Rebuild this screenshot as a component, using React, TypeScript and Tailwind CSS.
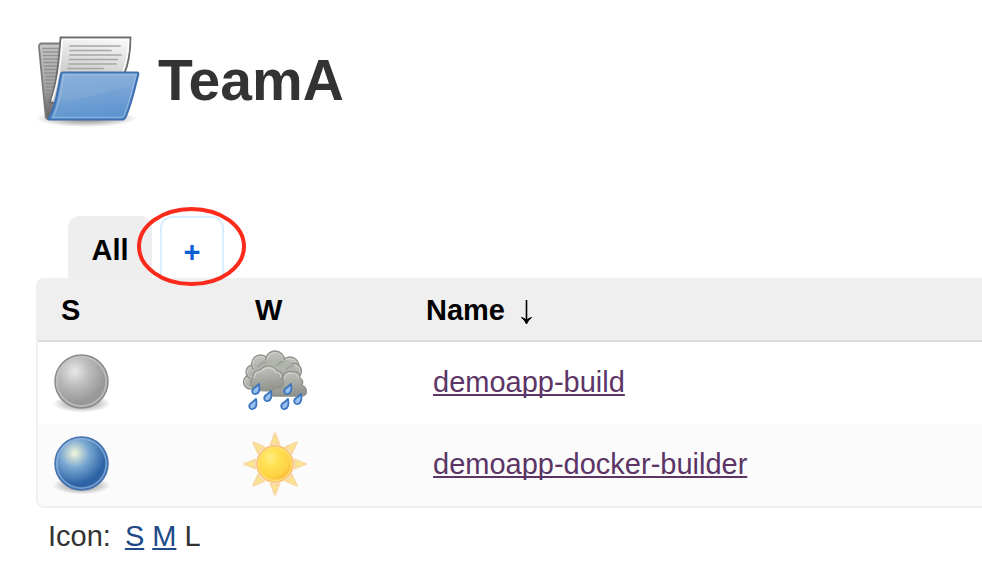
import React from "react";

function FolderIcon() {
  return (
    <svg width="106" height="94" viewBox="36 34 106 94" aria-hidden="true">
      <defs>
        <linearGradient id="front" x1="0" y1="0" x2="0.2" y2="1">
          <stop offset="0" stopColor="#84acd9" />
          <stop offset="0.5" stopColor="#77a3d5" />
          <stop offset="1" stopColor="#5f95d0" />
        </linearGradient>
        <linearGradient id="paper" x1="0.6" y1="0" x2="0.4" y2="1">
          <stop offset="0" stopColor="#f6f6f6" />
          <stop offset="0.5" stopColor="#d2d2d2" />
          <stop offset="1" stopColor="#c8c8c8" />
        </linearGradient>
        <linearGradient id="back" x1="0" y1="0" x2="0" y2="1">
          <stop offset="0" stopColor="#c8c8c8" />
          <stop offset="0.6" stopColor="#a0a0a0" />
          <stop offset="1" stopColor="#606060" />
        </linearGradient>
        <radialGradient id="folderShadow">
          <stop offset="0" stopColor="#000" stopOpacity="0.5" />
          <stop offset="0.6" stopColor="#000" stopOpacity="0.22" />
          <stop offset="1" stopColor="#000" stopOpacity="0" />
        </radialGradient>
      </defs>
      <ellipse cx="86" cy="118.500" rx="51" ry="8.500" fill="url(#folderShadow)" />
      <path d="M42 43.500h24l-4 75.500H48q-2 0-2.300-2.500L39 47q-.3-3.500 3-3.500z" fill="url(#back)" stroke="#7a7a7a" strokeWidth="1.800" />
      <path d="M42 48.500h17M42.500 52h17M43 55.500h16M43 59h16M43.500 62.500h15M44 66h14M44 69.500h14M44.500 73h13M45 76.500h12M45 80h11M45.500 83.500h10M46 87h9M46 90.500h8M46.500 94h6" stroke="#858585" strokeOpacity="0.75" strokeWidth="1.300" />
      <path d="M60.500 37.500h70c0 14-1.500 26-7 38L62 104l-12.500-1.500c4-10 8-22 11-65z" fill="url(#paper)" stroke="#6c6c6c" strokeWidth="1.800" />
      <path d="M62.500 39.500h66c0 12-1.500 22-6 33M62.300 40c-1 22-4 42-10 60" fill="none" stroke="#fff" strokeOpacity="0.9" strokeWidth="1.500" />
      <path d="M70 46h50M70 50.500h41M70 55h51M69.500 59.500h48M69 64h47M68 68.500h35" stroke="#a6a6a6" strokeWidth="1.700" strokeLinecap="round" />
      <path d="M49 118c6-10 8-22 12-43.500q.3-2 2-2h74q1.700 0 1.200 2c-4 16-7 30-12.500 42-1 2.300-2 3-4 3H50q-2.500 0-1-1.500z" fill="url(#front)" stroke="#3f72b2" strokeWidth="2.200" />
      <path d="M53 117.500c5-10 8-22 10.500-43h72.500c-4 17-7 29-12 41.500q-.8 1.500-2.500 1.500z" fill="none" stroke="#b1cbea" strokeOpacity="0.5" strokeWidth="1.500" />
      <path d="M64 75h71l-4 12c-24 1-39 13-72 14 3-8 4-17 5-26z" fill="#fff" fillOpacity="0.06" />
    </svg>
  );
}

function BallIcon({ id, colors, rim, halo }: { id: string; colors: string[]; rim: string; halo: string }) {
  return (
    <svg className="block" width="64" height="64" viewBox="0 0 64 64" role="img" aria-label={id}>
      <defs>
        <radialGradient id={id} cx="0.37" cy="0.31" r="0.68">
          <stop offset="0" stopColor={colors[0]} />
          <stop offset="0.4" stopColor={colors[1]} />
          <stop offset="0.85" stopColor={colors[2]} />
          <stop offset="1" stopColor={colors[2]} />
        </radialGradient>
        <radialGradient id={id + "Shadow"}>
          <stop offset="0" stopColor="#000" stopOpacity="0.45" />
          <stop offset="0.65" stopColor="#000" stopOpacity="0.18" />
          <stop offset="1" stopColor="#000" stopOpacity="0" />
        </radialGradient>
      </defs>
      <ellipse cx="32.500" cy="53.500" rx="29" ry="9" fill={"url(#" + id + "Shadow)"} />
      <circle cx="32.500" cy="31.500" r="26.500" fill={"url(#" + id + ")"} stroke={rim} strokeWidth="1.500" />
      <circle cx="32.500" cy="31.500" r="24.700" fill="none" stroke={halo} strokeOpacity="0.7" strokeWidth="1.800" />
    </svg>
  );
}

function Puff({ cx, cy, r }: { cx: number; cy: number; r: number }) {
  return (
    <g>
      <circle cx={cx} cy={cy} r={r} fill="url(#puff)" stroke="#8e908b" strokeWidth="1.300" />
      <circle cx={cx} cy={cy} r={r - 1.4} fill="none" stroke="#dcddd8" strokeOpacity="0.45" strokeWidth="1.200" />
    </g>
  );
}

function RainIcon() {
  return (
    <svg className="block" width="66" height="64" viewBox="0 0 66 64" role="img" aria-label="rain">
      <defs>
        <linearGradient id="puff" x1="0" y1="0" x2="0.2" y2="1">
          <stop offset="0" stopColor="#c9cac5" />
          <stop offset="1" stopColor="#a4a6a0" />
        </linearGradient>
        <linearGradient id="cloud" x1="0" y1="0" x2="0.2" y2="1">
          <stop offset="0" stopColor="#c6c7c2" />
          <stop offset="1" stopColor="#92948e" />
        </linearGradient>
        <linearGradient id="drop" x1="0" y1="0" x2="1" y2="1">
          <stop offset="0" stopColor="#5b90d2" />
          <stop offset="0.6" stopColor="#9fc6f0" />
          <stop offset="1" stopColor="#5b90d2" />
        </linearGradient>
      </defs>
      <Puff cx={8.5} cy={32} r={7} />
      <Puff cx={11} cy={22} r={7} />
      <Puff cx={18.5} cy={14} r={9} />
      <Puff cx={48} cy={16} r={9} />
      <Puff cx={33} cy={10.5} r={9.5} />
      <Puff cx={52} cy={21} r={7.5} />
      <path d="M20 10h26l9 10 4 18H10l-3-8 4-10z" fill="#b1b3ad" />
      <path d="M24 13c-4-1-6 1-8 4M42 12c-3-1-5 1-7 4M52 16c-4-1-6 1-8 4" fill="none" stroke="#90928c" strokeOpacity="0.7" strokeWidth="1.300" />
      <path d="M35 37c0-4 4-5 6-8-1-5 5-9 9-7 5-1 8 2 8 6 3 2 3 5 2 7 6 3 6 11-1 11H32c-4 0-4-6 3-9z" fill="url(#cloud)" stroke="#8c8e88" strokeWidth="1.300" />
      <path d="M42.500 29c-1-4 4-7 7.500-5.500 4-1 6.500 1 6.500 5" fill="none" stroke="#cfd0cb" strokeWidth="1.200" />
      <path d="M14 38c-6-1-7-7-3-10-1-5 3-8 7-8 5-6 14-5 17 1 5 0 7 5 5 8 4 4 0 10-5 9-6 4-17 4-21 0z" fill="url(#cloud)" stroke="#92948e" strokeWidth="1.200" />
      <path d="M12.500 28c-.5-4 2.500-6.500 6.500-6.500 5-5.500 12-4.500 15 1 3 0 5 2 5 5" fill="none" stroke="#d3d4cf" strokeWidth="1.200" />
      <g fill="url(#drop)" stroke="#3d76bf" strokeWidth="1.800" strokeLinejoin="round">
        <path d="M17 34c1 5 .5 9-3 10-4 1-5-4-2-6 2-1 3.500-2.500 5-4z" />
        <path d="M29 41c1 5 .5 9-3 10-4 1-5-4-2-6 2-1 3.500-2.500 5-4z" />
        <path d="M49 34c1 5 .5 9-3 10-4 1-5-4-2-6 2-1 3.500-2.500 5-4z" />
        <path d="M14 49c1 5 .5 9-3 10-4 1-5-4-2-6 2-1 3.500-2.500 5-4z" />
        <path d="M46 49c1 5 .5 9-3 10-4 1-5-4-2-6 2-1 3.500-2.500 5-4z" />
        <path d="M59 44c1 5 .5 9-3 10-4 1-5-4-2-6 2-1 3.500-2.500 5-4z" />
      </g>
    </svg>
  );
}

function SunIcon() {
  const angles = [0, 45, 90, 135, 180, 225, 270, 315];
  return (
    <svg className="block" width="66" height="64" viewBox="0 0 66 64" role="img" aria-label="sun">
      <defs>
        <radialGradient id="sun" cx="0.37" cy="0.33" r="0.7">
          <stop offset="0" stopColor="#ffee85" />
          <stop offset="0.35" stopColor="#ffe052" />
          <stop offset="0.75" stopColor="#fdd243" />
          <stop offset="1" stopColor="#f8b13d" />
        </radialGradient>
      </defs>
      {angles.map((a) => (
        <path key={a} d="M33 1l4.500 11.500q-4.500-1.600-9 0z" transform={"rotate(" + a + " 33 32)"} fill="#fbe58c" stroke="#f9d7a0" strokeWidth="1.800" strokeLinejoin="round" />
      ))}
      <circle cx="33" cy="32" r="18" fill="url(#sun)" stroke="#f9c277" strokeWidth="1.800" />
      <circle cx="33" cy="32" r="16.500" fill="none" stroke="#ffe070" strokeWidth="1.300" />
    </svg>
  );
}

function ArrowDown() {
  return (
    <svg className="mt-1 ml-4" width="14" height="28" viewBox="0 0 14 28" aria-label="sorted ascending">
      <path d="M5.500 2v21" stroke="#000" strokeWidth="1.600" />
      <path d="M.5 19.500q3.500 1 5 2.500 1.500-1.500 5-2.500-3.500 3-5 6.500-1.500-3.500-5-6.500z" fill="#000" stroke="#000" strokeWidth="1" strokeLinejoin="round" />
    </svg>
  );
}

const jobs = [
  {
    name: "demoapp-build",
    status: <BallIcon id="grey" colors={["#e8e8e8", "#bdbdbd", "#999999"]} rim="#8a8a8a" halo="#c8c8c8" />,
    weather: <RainIcon />,
    row: "bg-white",
  },
  {
    name: "demoapp-docker-builder",
    status: <BallIcon id="blue" colors={["#f3f6d8", "#79a7d2", "#2e64a6"]} rim="#4672ae" halo="#8fb4e0" />,
    weather: <SunIcon />,
    row: "bg-[#fbfbfb]",
  },
];

const link = "underline decoration-2 underline-offset-2 [text-decoration-skip-ink:none]";
const heading = "border-b-2 border-[#dcdcdc] font-bold";

export default function App() {
  return (
    <main className="overflow-hidden bg-white pt-[34px] pl-9 font-['Liberation_Sans',Arial,sans-serif] text-[29px] leading-9 text-[#333]">
      <header className="flex items-start gap-4">
        <FolderIcon />
        <h1 className="mt-3 text-[57px] leading-[68px] font-bold">TeamA</h1>
      </header>

      <nav className="mt-[88px] flex gap-2 pl-8 font-bold" aria-label="Views">
        <a href="#all" className="flex h-[62px] w-[84px] items-center justify-center rounded-t-xl bg-[#eee] pt-1.5 text-black">
          All
        </a>
        <div className="relative">
          <button type="button" aria-label="New view" className="flex h-[62px] w-16 items-center justify-center rounded-t-xl border-2 border-b-0 border-[#d9eeff] pt-2 font-bold text-[#0b5ed7]">
            +
          </button>
          <svg className="pointer-events-none absolute -top-[10px] -left-6" width="112" height="82" viewBox="0 0 112 82" aria-hidden="true">
            <ellipse cx="55.500" cy="40.500" rx="52.500" ry="37.500" fill="none" stroke="#fc2b1c" strokeWidth="4" />
          </svg>
        </div>
      </nav>

      <div className="overflow-hidden rounded-l-lg border-2 border-r-0 border-[#efefef]">
        <table className="w-full table-fixed border-separate border-spacing-0 text-left">
          <colgroup>
            <col className="w-[194px]" />
            <col className="w-[184px]" />
            <col />
          </colgroup>
          <thead className="bg-[#efefef] text-black">
            <tr className="h-[62px]">
              <th className={"pl-[23px] " + heading}>S</th>
              <th className={"pl-[23px] " + heading}>W</th>
              <th className={"pl-[10px] " + heading}>
                <span className="flex items-center">
                  Name
                  <ArrowDown />
                </span>
              </th>
            </tr>
          </thead>
          <tbody>
            {jobs.map((job) => (
              <tr key={job.name} className={"h-[82px] " + job.row}>
                <td className="pb-0.5 pl-[11px]">{job.status}</td>
                <td className="pb-0.5 pl-[10px]">{job.weather}</td>
                <td className="pb-0.5 pl-[17px]">
                  <a href={"#" + job.name} className={"text-[#5c3566] " + link}>
                    {job.name}
                  </a>
                </td>
              </tr>
            ))}
          </tbody>
        </table>
      </div>

      <footer className="mt-2.5 flex gap-2 pl-3">
        <span className="mr-1.5">Icon:</span>
        <a href="#small" className={"text-[#204a87] " + link}>S</a>
        <a href="#medium" className={"text-[#204a87] " + link}>M</a>
        <span>L</span>
      </footer>
    </main>
  );
}
